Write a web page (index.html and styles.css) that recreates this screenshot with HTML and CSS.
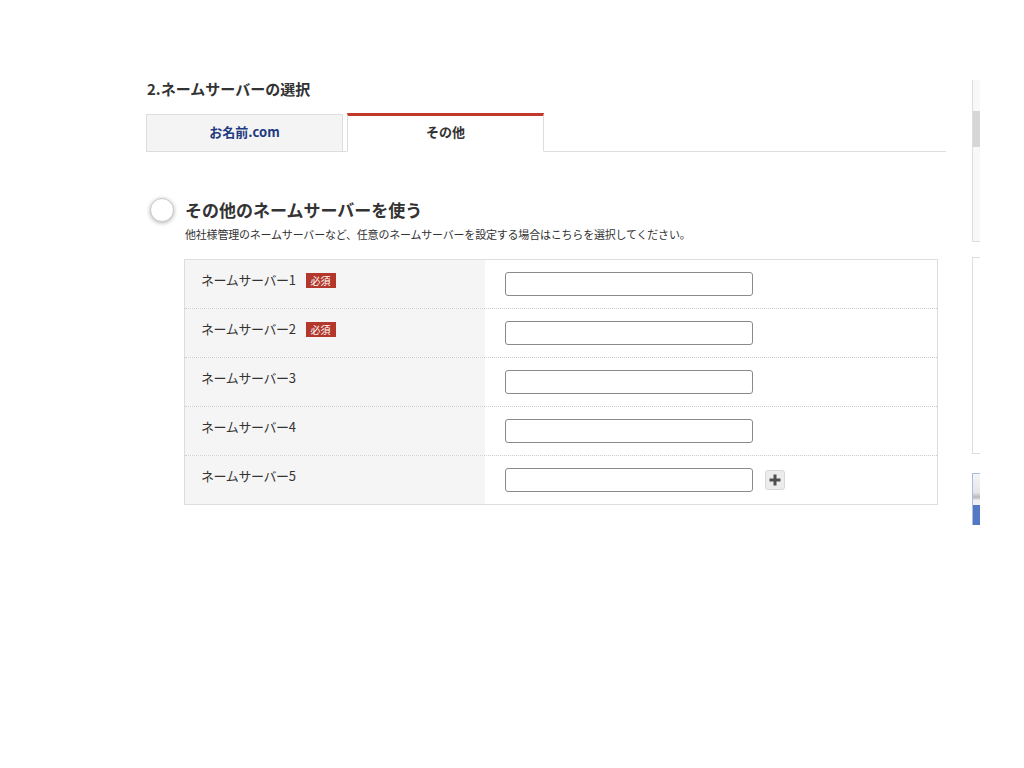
FILE: index.html
```html
<!DOCTYPE html>
<html lang="ja">
<head>
<meta charset="utf-8">
<title>ネームサーバーの選択</title>
<link rel="stylesheet" href="styles.css">
</head>
<body>
<div class="page">
  <div class="main">
    <h2 class="heading">2.ネームサーバーの選択</h2>
    <div class="tabs">
      <div class="tab tab-onamae">お名前.com</div>
      <div class="tab tab-active">その他</div>
    </div>

    <div class="option">
      <span class="radio"></span>
      <div class="option-text">
        <div class="option-title">その他のネームサーバーを使う</div>
        <div class="option-desc">他社様管理のネームサーバーなど、任意のネームサーバーを設定する場合はこちらを選択してください。</div>
      </div>
    </div>

    <div class="ns-table">
      <div class="row">
        <div class="label">ネームサーバー1<span class="badge">必須</span></div>
        <div class="field"><input class="input" type="text"></div>
      </div>
      <div class="row">
        <div class="label">ネームサーバー2<span class="badge">必須</span></div>
        <div class="field"><input class="input" type="text"></div>
      </div>
      <div class="row">
        <div class="label">ネームサーバー3</div>
        <div class="field"><input class="input" type="text"></div>
      </div>
      <div class="row">
        <div class="label">ネームサーバー4</div>
        <div class="field"><input class="input" type="text"></div>
      </div>
      <div class="row">
        <div class="label">ネームサーバー5</div>
        <div class="field"><input class="input" type="text">
          <span class="add-btn"><svg width="12" height="12" viewBox="0 0 12 12"><path d="M6 0.5v11M0.5 6h11" stroke="#505050" stroke-width="3"/></svg></span>
        </div>
      </div>
    </div>
  </div>

  <div class="side">
    <div class="side-scroll"><div class="side-thumb"></div></div>
    <div class="side-box"></div>
    <div class="side-btn"><div class="side-btn-top"></div><div class="side-btn-blue"></div></div>
  </div>
</div>
</body>
</html>
```

FILE: styles.css
```css
html, body {
  margin: 0;
  padding: 0;
  background: #fff;
}
body {
  font-family: "Noto Sans CJK JP", "Noto Sans", sans-serif;
  color: #333;
}
.page {
  display: flex;
  align-items: flex-start;
  padding: 79px 0 0 146px;
}
.main {
  width: 800px;
}
.heading {
  margin: 0 0 14px 1px;
  font-size: 15px;
  line-height: 20px;
  font-weight: bold;
  color: #333;
}
.tabs {
  display: flex;
  align-items: flex-end;
  gap: 4px;
  height: 38px;
  border-bottom: 1px solid #ddd;
}
.tab {
  box-sizing: border-box;
  width: 197px;
  margin-bottom: -1px;
  padding-bottom: 3px;
  display: flex;
  align-items: center;
  justify-content: center;
  font-size: 13px;
  font-weight: bold;
}
.tab-onamae {
  height: 38px;
  background: #f4f4f4;
  border: 1px solid #ddd;
  color: #1e3a80;
}
.tab-active {
  height: 39px;
  width: 197px;
  background: #fff;
  border: 1px solid #ddd;
  border-top: 3px solid #c0392b;
  border-bottom: 1px solid #fff;
  color: #333;
  padding-bottom: 5px;
}
.option {
  display: flex;
  align-items: flex-start;
  margin: 46px 0 0 4px;
}
.radio {
  box-sizing: border-box;
  width: 24px;
  height: 24px;
  border-radius: 50%;
  background: #fff;
  border: 1px solid #c8c8c8;
  box-shadow: 0 1px 4px rgba(0, 0, 0, 0.3);
  flex: none;
}
.option-text {
  margin-left: 11px;
}
.option-title {
  font-size: 17px;
  line-height: 24px;
  font-weight: bold;
  color: #333;
}
.option-desc {
  margin-top: 4px;
  font-size: 11px;
  line-height: 16px;
  color: #333;
  letter-spacing: -0.2px;
}
.ns-table {
  margin: 17px 0 0 38px;
  width: 754px;
  box-sizing: border-box;
  border: 1px solid #ddd;
}
.row {
  display: flex;
  height: 49px;
  box-sizing: border-box;
  border-top: 1px dotted #ccc;
}
.row:first-child {
  border-top: none;
  height: 48px;
}
.label {
  width: 300px;
  box-sizing: border-box;
  background: #f5f5f5;
  padding: 11px 0 0 16px;
  font-size: 13px;
  line-height: 18px;
  color: #333;
  letter-spacing: -0.4px;
  display: flex;
  align-items: flex-start;
}
.badge {
  margin: 2px 0 0 10px;
  width: 30px;
  height: 15px;
  background: #b3382b;
  color: #fff;
  font-size: 10px;
  line-height: 15px;
  letter-spacing: 0;
  text-align: center;
}
.field {
  flex: 1;
  display: flex;
  align-items: center;
  padding: 12px 0 0 20px;
  align-self: flex-start;
}
.input {
  box-sizing: border-box;
  width: 248px;
  height: 24px;
  margin: 0;
  border: 1px solid #8a8a8a;
  border-radius: 3px;
  background: #fff;
  padding: 0 4px;
}
.add-btn {
  box-sizing: border-box;
  margin-left: 12px;
  width: 20px;
  height: 20px;
  border-radius: 3px;
  background: #ececec;
  border: 1px solid #d8d8d8;
  display: flex;
  align-items: center;
  justify-content: center;
}
.side {
  margin-left: 26px;
  margin-top: 1px;
  width: 8px;
  overflow: hidden;
}
.side-scroll {
  box-sizing: border-box;
  height: 162px;
  background: #f8f8f8;
  border-left: 1px solid #ddd;
  border-bottom: 1px solid #ddd;
  padding-top: 31px;
}
.side-thumb {
  height: 36px;
  background: #d6d6d6;
}
.side-box {
  box-sizing: border-box;
  margin-top: 15px;
  height: 197px;
  border: 1px solid #ddd;
  border-right: none;
}
.side-btn {
  margin-top: 19px;
  height: 52px;
  box-sizing: border-box;
  border-left: 1px solid #a9bde3;
  border-top: 1px solid #a9bde3;
}
.side-btn-top {
  height: 31px;
  background: linear-gradient(#f4f4f4, #e6e6e6 60%, #b8b8b8 75%, #f0f0f0 85%);
}
.side-btn-blue {
  height: 20px;
  background: #5578c2;
}
```
